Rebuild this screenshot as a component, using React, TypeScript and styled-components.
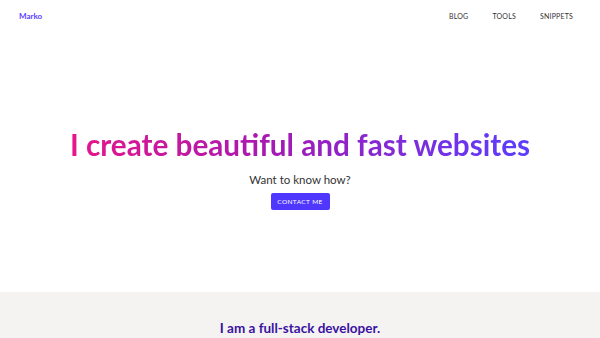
import styled, { createGlobalStyle } from "styled-components";

const GlobalStyle = createGlobalStyle`
  html, body {
    margin: 0;
    padding: 0;
    background: #ffffff;
    font-family: Lato, "Noto Sans", sans-serif;
  }
`;

const Page = styled.div`
  width: 100%;
  min-height: 100vh;
  display: flex;
  flex-direction: column;
`;

const NavBar = styled.nav`
  height: 32px;
  display: flex;
  align-items: center;
  justify-content: space-between;
  padding: 0 27px 0 19px;
`;

const Logo = styled.a`
  font-size: 8px;
  font-weight: 700;
  color: #5a3dff;
  text-decoration: none;
`;

const NavLinks = styled.div`
  display: flex;
  gap: 24px;
`;

const NavLink = styled.a`
  font-size: 7px;
  text-transform: uppercase;
  letter-spacing: 0.2px;
  color: #333;
  text-decoration: none;
`;

const Hero = styled.section`
  height: 260px;
  display: flex;
  flex-direction: column;
  align-items: center;
  justify-content: center;
  padding-top: 12px;
  box-sizing: border-box;
`;

const Title = styled.h1`
  margin: 0;
  font-size: 29.7px;
  font-weight: 700;
  line-height: 38px;
  background: linear-gradient(90deg, #e8158a 0%, #a31ab4 45%, #5a3dff 100%);
  -webkit-background-clip: text;
  background-clip: text;
  color: transparent;
`;

const Subtitle = styled.p`
  margin: 9px 0 6px;
  font-size: 11.5px;
  line-height: 14px;
  color: #333;
`;

const Button = styled.button`
  width: 59px;
  height: 17px;
  border: none;
  border-radius: 2px;
  background: #4f37ff;
  color: #fff;
  font-family: inherit;
  font-size: 6.5px;
  letter-spacing: 0.4px;
  text-transform: uppercase;
  cursor: pointer;
  padding: 0;
`;

const About = styled.section`
  flex: 1;
  background: #f4f3f2;
  display: flex;
  justify-content: center;
  padding-top: 28px;
`;

const AboutTitle = styled.h2`
  margin: 0;
  font-size: 13.5px;
  font-weight: 700;
  color: #3a12a0;
`;

export default function App() {
  return (
    <>
      <GlobalStyle />
      <Page>
        <NavBar>
          <Logo href="#">Marko</Logo>
          <NavLinks>
            <NavLink href="#">Blog</NavLink>
            <NavLink href="#">Tools</NavLink>
            <NavLink href="#">Snippets</NavLink>
          </NavLinks>
        </NavBar>
        <Hero>
          <Title>I create beautiful and fast websites</Title>
          <Subtitle>Want to know how?</Subtitle>
          <Button>Contact me</Button>
        </Hero>
        <About>
          <AboutTitle>I am a full-stack developer.</AboutTitle>
        </About>
      </Page>
    </>
  );
}
